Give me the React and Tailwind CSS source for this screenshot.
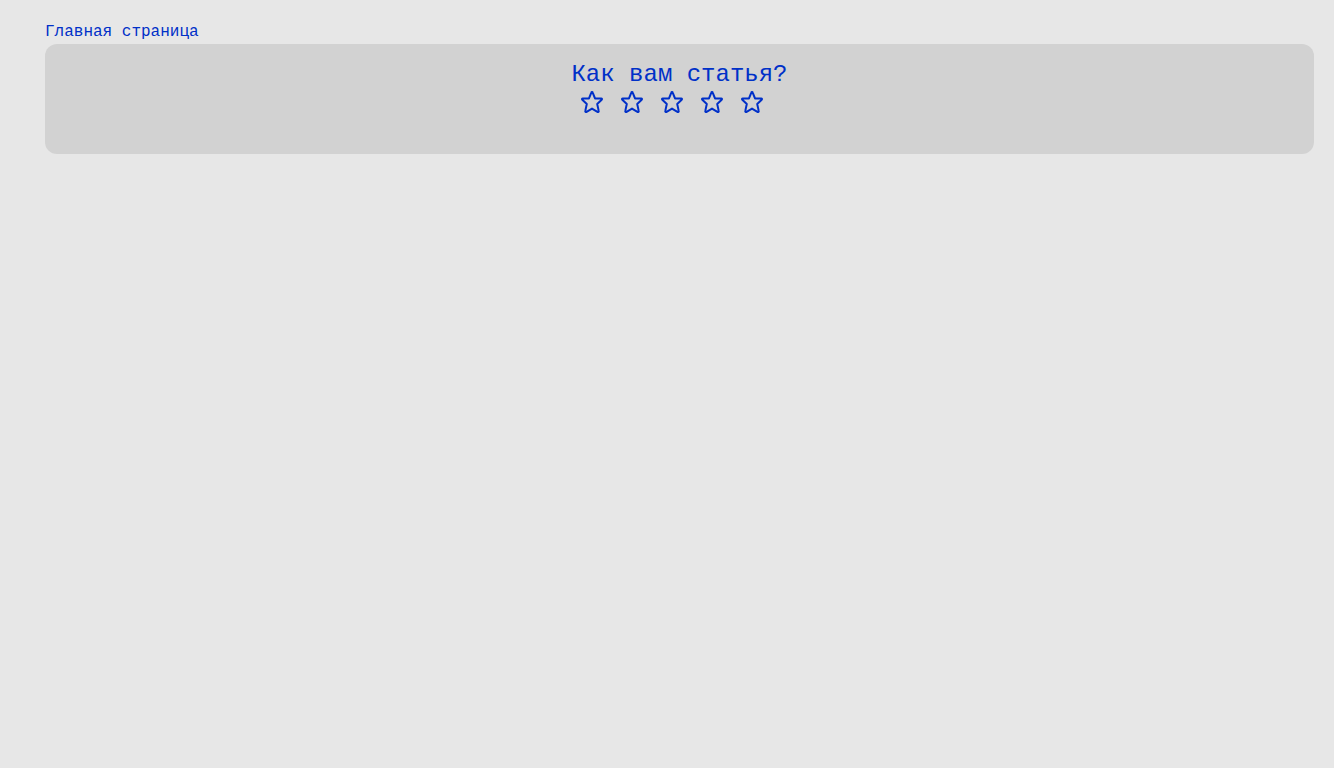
import { useState } from "react";

const RATINGS = [1, 2, 3, 4, 5];

function StarIcon({ filled }) {
  return (
    <svg
      viewBox="0 0 24 24"
      className="block size-6"
      fill={filled ? "currentColor" : "none"}
      stroke="currentColor"
      strokeWidth="2"
      strokeLinecap="round"
      strokeLinejoin="round"
      aria-hidden="true"
    >
      <path d="M11.3 2.6C11.5 1.9 12.5 1.9 12.7 2.6L15 8.4H21.2C22 8.4 22.3 9.3 21.7 9.8L17.2 14L18.7 20.9C18.9 21.7 18.1 22.2 17.4 21.8L12 18.6L6.6 21.8C5.9 22.2 5.1 21.7 5.3 20.9L6.8 14L2.3 9.8C1.7 9.3 2 8.4 2.8 8.4H9Z" />
    </svg>
  );
}

export default function App() {
  const [rating, setRating] = useState(0);

  return (
    <div className="min-h-screen bg-[#e7e7e7] pt-5 pr-5 pl-[45px] font-['Liberation_Mono',monospace] text-[#0030c8]">
      <main>
        <h1 className="text-base leading-6">Главная страница</h1>
        <section className="flex flex-col items-center rounded-xl bg-[#d2d2d2] pt-4 pb-10">
          <h2 className="text-2xl leading-[30px]">Как вам статья?</h2>
          <div className="flex gap-4 pr-4">
            {RATINGS.map((value) => (
              <button
                key={value}
                type="button"
                aria-label={`Оценка ${value}`}
                aria-pressed={rating === value}
                onClick={() => setRating(value)}
                className="cursor-pointer"
              >
                <StarIcon filled={value <= rating} />
              </button>
            ))}
          </div>
        </section>
      </main>
    </div>
  );
}
